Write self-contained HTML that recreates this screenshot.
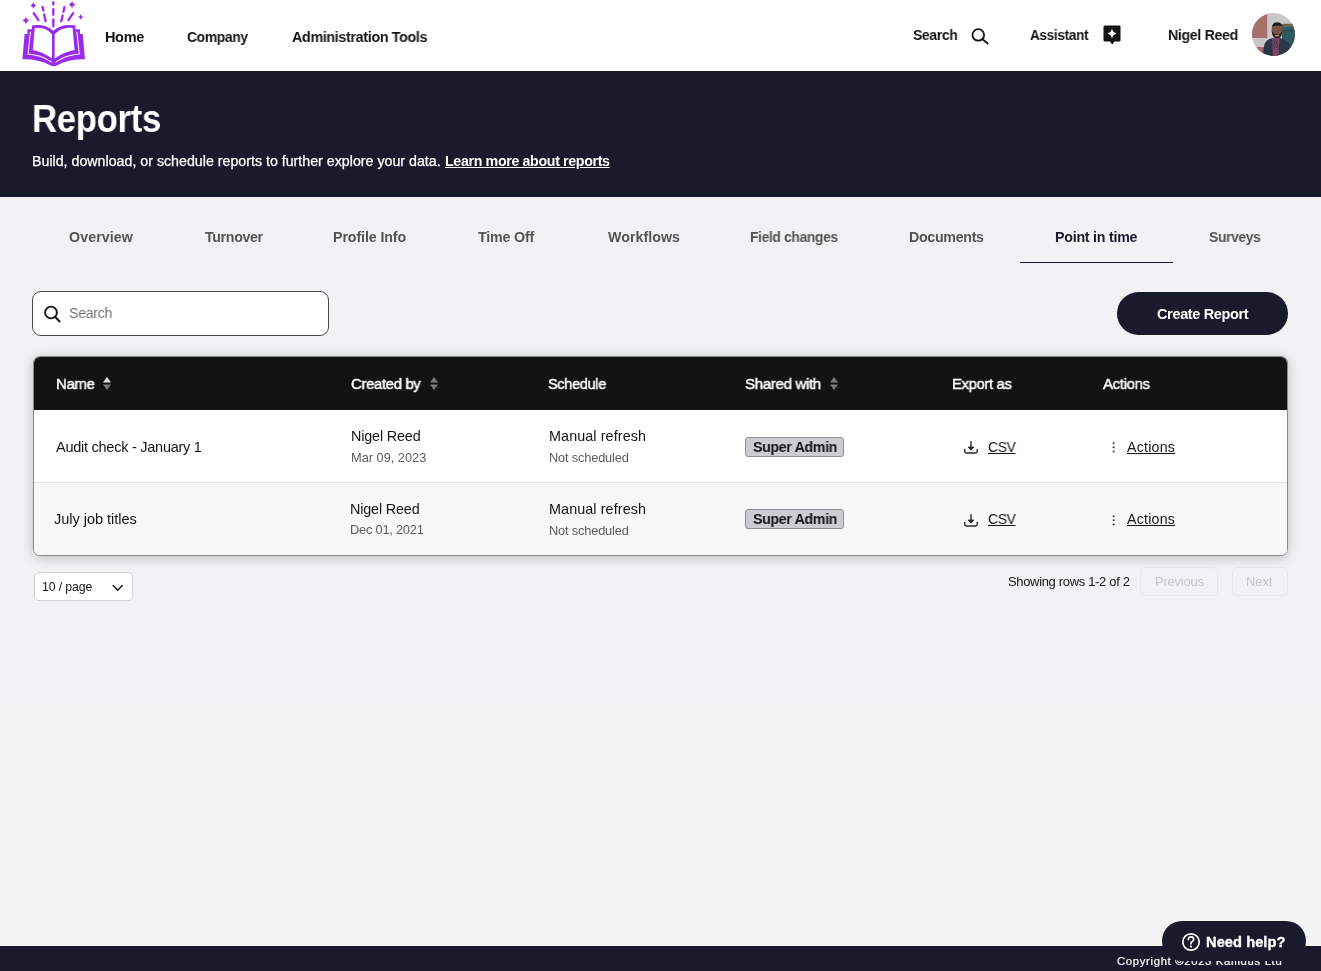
<!DOCTYPE html>
<html><head><meta charset="utf-8">
<title>Reports</title>
<style>
*{box-sizing:border-box;margin:0;padding:0}
html,body{width:1321px;height:971px;overflow:hidden}
.t{will-change:transform}
body{font-family:"Liberation Sans",sans-serif;background:#f2f2f4;color:#141414;position:relative}
.t{position:absolute;white-space:nowrap}
.box{position:absolute}
svg{position:absolute;overflow:visible}
</style></head><body>
<div class="box" style="left:0;top:706px;width:1321px;height:240px;background:#f3f3f3"></div>
<!-- header -->
<div class="box" style="left:0;top:0;width:1321px;height:71px;background:#fff"></div>
<svg style="left:18px;top:0" width="72" height="70" viewBox="0 0 999 971">
  <g fill="#9b2bea">
    <path d="M92,472 L130,472 L130,406 L193,406 L193,352 Q380,325 490,425 Q600,325 797,352 L797,406 L860,406 L860,472 L898,472 L930,823 Q720,815 545,905 Q490,935 445,905 Q270,815 61,823 Z"/>
  </g>
  <g fill="#fff">
    <path d="M232,388 Q385,372 472,475 L472,812 Q340,718 206,694 Z"/>
    <path d="M758,388 Q605,372 508,475 L508,812 Q640,718 784,694 Z"/>
  </g>
  <g fill="none" stroke="#fff" stroke-width="14" stroke-linecap="round">
    <path d="M172,445 L140,750 Q330,768 462,858"/>
    <path d="M818,445 L850,750 Q660,768 528,858"/>
  </g>
  <g fill="none" stroke="#9b2bea" stroke-width="32" stroke-linecap="round">
    <path d="M490,30 L490,62"/>
    <path d="M490,128 L490,205"/>
    <path d="M490,268 L490,365"/>
    <path d="M340,95 L352,145"/>
    <path d="M362,200 L383,292"/>
    <path d="M645,98 L630,162"/>
    <path d="M620,215 L600,295"/>
    <path d="M218,182 L283,278"/>
    <path d="M765,182 L700,278"/>
  </g>
  <g fill="#9b2bea">
    <path d="M110,235 Q120,275 155,285 Q120,295 110,335 Q100,295 62,285 Q100,275 110,235 Z"/>
    <path d="M213,30 Q222,65 252,75 Q222,85 213,120 Q204,85 174,75 Q204,65 213,30 Z"/>
    <path d="M750,15 Q760,55 795,65 Q760,75 750,115 Q740,75 705,65 Q740,55 750,15 Z"/>
    <path d="M870,195 Q878,228 905,235 Q878,242 870,275 Q862,242 835,235 Q862,228 870,195 Z"/>
  </g>
</svg>
<!-- header search icon -->
<svg style="left:968px;top:25px" width="24" height="22" viewBox="0 0 24 22">
  <circle cx="10.3" cy="9.9" r="5.8" fill="none" stroke="#141414" stroke-width="1.8"/>
  <path d="M14.6,14.2 L19.6,18.4" stroke="#141414" stroke-width="1.9" stroke-linecap="round"/>
</svg>
<!-- assistant icon -->
<svg style="left:1100px;top:22px" width="24" height="26" viewBox="0 0 24 26">
  <path d="M5.5,3.5 L19.5,3.5 Q20.5,3.5 20.5,4.5 L20.5,18.5 Q20.5,19.5 19.5,19.5 L14.5,19.5 L12.2,22.6 L9.9,19.5 L5.5,19.5 Q3.5,19.5 3.5,18.5 L3.5,4.5 Q3.5,3.5 5.5,3.5 Z" fill="#141414"/>
  <path d="M12,6.5 Q12.7,10.6 16.7,11.5 Q12.7,12.4 12,16.5 Q11.3,12.4 7.3,11.5 Q11.3,10.6 12,6.5 Z" fill="#fff"/>
</svg>
<!-- avatar -->
<svg style="left:1252px;top:13px" width="43" height="43" viewBox="0 0 43 43">
  <defs><clipPath id="av"><circle cx="21.5" cy="21.5" r="21.5"/></clipPath></defs>
  <g clip-path="url(#av)">
    <rect x="0" y="0" width="43" height="43" fill="#c7c7ca"/>
    <rect x="0" y="0" width="15.2" height="25" fill="#a86f6b"/>
    <rect x="0" y="34" width="14" height="10" fill="#a3716c"/>
    <rect x="29.5" y="10.8" width="14" height="2.4" fill="#75604f"/>
    <rect x="30" y="13.2" width="13" height="30" fill="#2f5b60"/>
    <rect x="30" y="17" width="13" height="1.2" fill="#254a4e"/>
    <path d="M10.2,43 L12.5,31 Q14.5,26.5 20,25.2 L28,25 Q36.5,27 38.6,33 L40,43 Z" fill="#2e3748"/>
    <path d="M20.1,25 L27.5,25 L26.5,43 L21,43 Z" fill="#7d4466"/>
    <path d="M21.5,27 L23,29 L21.8,31 L23.5,33 L22,35.5 M25.5,27 L24.5,30 L26,32.5 L24.8,35" stroke="#3a3454" stroke-width="1" fill="none"/>
    <path d="M19.6,17.5 Q19.5,11.5 25,11 Q30.6,11.2 30.5,17.5 Q30.3,24.8 25,25.2 Q19.8,24.8 19.6,17.5 Z" fill="#7c5442"/>
    <path d="M19.8,14.5 Q20.3,9.2 25.5,9.3 Q30.6,9.7 30.6,15.2 L29.6,13.2 Q25,11.6 20.6,13.8 Z" fill="#1f1b1b"/>
    <path d="M19.8,18.2 Q20.5,25.3 25,25.6 Q29.8,25.3 30.3,18.2 Q28.5,21.6 25.2,21.8 Q22,21.6 19.8,18.2 Z" fill="#2a201c"/>
    <path d="M23,22.5 Q25,23.6 27.2,22.5" stroke="#d8cfc8" stroke-width="0.9" fill="none"/>
  </g>
</svg>
<!-- banner -->
<div class="box" style="left:0;top:71px;width:1321px;height:126px;background:#191a2c"></div>
<!-- tab underline -->
<div class="box" style="left:1020px;top:262px;width:153px;height:1px;background:#191a2c"></div>
<!-- search input -->
<div class="box" style="left:32px;top:291px;width:297px;height:45px;border:1px solid #4a4a4a;border-radius:9px;background:#fff"></div>
<svg style="left:40px;top:302px" width="24" height="24" viewBox="0 0 24 24">
  <circle cx="11" cy="10.5" r="5.9" fill="none" stroke="#141414" stroke-width="1.9"/>
  <path d="M15.3,15 L19.6,19.5" stroke="#141414" stroke-width="2" stroke-linecap="round"/>
</svg>
<!-- create report -->
<div class="box" style="left:1117px;top:292px;width:171px;height:43px;border-radius:22px;background:#191a2c"></div>
<!-- table -->
<div class="box" style="left:33px;top:356px;width:1255px;height:200px;border-radius:7px;background:#fff;box-shadow:0 2px 12px rgba(0,0,0,.22);border:1px solid #8a8a8a;overflow:hidden">
  <div class="box" style="left:0;top:0;width:1253px;height:53px;background:#131313"></div>
  <div class="box" style="left:0;top:125px;width:1253px;height:73px;background:#f8f8f8;border-top:1px solid #e4e4e6"></div>
</div>
<!-- sort icons -->
<svg style="left:102px;top:376px" width="10" height="15" viewBox="0 0 10 15">
  <path d="M1,6.5 L5,1 L9,6.5 Z" fill="#e0e0e0"/><path d="M1,8.5 L5,14 L9,8.5 Z" fill="#7a7a7a"/>
</svg>
<svg style="left:429px;top:376px" width="10" height="15" viewBox="0 0 10 15">
  <path d="M1,6.5 L5,1 L9,6.5 Z" fill="#7a7a7a"/><path d="M1,8.5 L5,14 L9,8.5 Z" fill="#7a7a7a"/>
</svg>
<svg style="left:829px;top:376px" width="10" height="15" viewBox="0 0 10 15">
  <path d="M1,6.5 L5,1 L9,6.5 Z" fill="#7a7a7a"/><path d="M1,8.5 L5,14 L9,8.5 Z" fill="#7a7a7a"/>
</svg>
<!-- badges -->
<div class="box" style="left:745px;top:437px;width:99px;height:20px;background:#cbcbd0;border:1px solid #8e8e94;border-radius:3px"></div>
<div class="box" style="left:745px;top:509px;width:99px;height:20px;background:#cbcbd0;border:1px solid #8e8e94;border-radius:3px"></div>
<!-- download icons -->
<svg style="left:962px;top:439px" width="18" height="17" viewBox="0 0 18 17">
  <path d="M9,2.6 L9,10.6" fill="none" stroke="#2a2a2a" stroke-width="1.4" stroke-linecap="round"/>
  <path d="M6.2,8 L9,11.1 L11.8,8 Z" fill="#2a2a2a" stroke="#2a2a2a" stroke-width="0.9" stroke-linejoin="round"/>
  <path d="M2.8,10.4 L2.8,12.6 Q2.8,14 4.2,14 L13.8,14 Q15.2,14 15.2,12.6 L15.2,10.4" fill="none" stroke="#2a2a2a" stroke-width="1.4" stroke-linecap="round"/>
</svg>
<svg style="left:962px;top:511.5px" width="18" height="17" viewBox="0 0 18 17">
  <path d="M9,2.6 L9,10.6" fill="none" stroke="#2a2a2a" stroke-width="1.4" stroke-linecap="round"/>
  <path d="M6.2,8 L9,11.1 L11.8,8 Z" fill="#2a2a2a" stroke="#2a2a2a" stroke-width="0.9" stroke-linejoin="round"/>
  <path d="M2.8,10.4 L2.8,12.6 Q2.8,14 4.2,14 L13.8,14 Q15.2,14 15.2,12.6 L15.2,10.4" fill="none" stroke="#2a2a2a" stroke-width="1.4" stroke-linecap="round"/>
</svg>
<!-- kebab dots -->
<svg style="left:1110px;top:440px" width="8" height="15" viewBox="0 0 8 15">
  <circle cx="3.6" cy="3.2" r="1" fill="#333"/><circle cx="3.6" cy="7.3" r="1" fill="#333"/><circle cx="3.6" cy="11.4" r="1" fill="#333"/>
</svg>
<svg style="left:1110px;top:512.5px" width="8" height="15" viewBox="0 0 8 15">
  <circle cx="3.6" cy="3.2" r="1" fill="#333"/><circle cx="3.6" cy="7.3" r="1" fill="#333"/><circle cx="3.6" cy="11.4" r="1" fill="#333"/>
</svg>
<!-- pagination -->
<div class="box" style="left:34px;top:572px;width:99px;height:29px;background:#fff;border:1px solid #d2d2d4;border-radius:5px"></div>
<svg style="left:110px;top:582px" width="16" height="12" viewBox="0 0 16 12">
  <path d="M3.2,3.6 L7.7,8.3 L12.2,3.6" fill="none" stroke="#141414" stroke-width="1.45" stroke-linecap="round" stroke-linejoin="round"/>
</svg>
<div class="box" style="left:1140px;top:567px;width:78px;height:29px;border:1px solid #e7e7ea;border-radius:5px"></div>
<div class="box" style="left:1232px;top:567px;width:56px;height:29px;border:1px solid #e7e7ea;border-radius:5px"></div>
<!-- footer -->
<div class="box" style="left:0;top:946px;width:1321px;height:25px;background:#191a2c"></div>
<div class="t" id="home" style="left:105.49px;top:30px;font-size:14.5px;line-height:14.5px;letter-spacing:-0.35px;transform:scaleX(0.9881);transform-origin:0 0;font-weight:bold;color:#141414;">Home</div>
<div class="t" id="company" style="left:187.29px;top:30px;font-size:14.5px;line-height:14.5px;letter-spacing:-0.35px;transform:scaleX(0.9539);transform-origin:0 0;font-weight:bold;color:#141414;">Company</div>
<div class="t" id="admin" style="left:291.7px;top:30px;font-size:14.5px;line-height:14.5px;letter-spacing:-0.35px;transform:scaleX(0.9869);transform-origin:0 0;font-weight:bold;color:#141414;">Administration Tools</div>
<div class="t" id="hsearch" style="left:913.3px;top:28px;font-size:14.5px;line-height:14.5px;letter-spacing:-0.35px;transform:scaleX(0.9618);transform-origin:0 0;font-weight:bold;color:#141414;">Search</div>
<div class="t" id="assist" style="left:1029.98px;top:28px;font-size:14.5px;line-height:14.5px;letter-spacing:-0.35px;transform:scaleX(0.9360);transform-origin:0 0;font-weight:bold;color:#141414;">Assistant</div>
<div class="t" id="hname" style="left:1167.76px;top:28px;font-size:14.5px;line-height:14.5px;letter-spacing:-0.35px;transform:scaleX(0.9772);transform-origin:0 0;font-weight:bold;color:#141414;">Nigel Reed</div>
<div class="t" id="title" style="left:32.19px;top:100px;font-size:38.28px;line-height:38.28px;letter-spacing:-0.35px;transform:scaleX(0.9071);transform-origin:0 0;font-weight:bold;color:#ffffff;">Reports</div>
<div class="t" id="subtitle" style="left:32.48px;top:154px;font-size:14.22px;line-height:14.22px;letter-spacing:0.0px;color:#ffffff;-webkit-text-stroke:0.25px #fff;">Build, download, or schedule reports to further explore your data.</div>
<div class="t" id="link" style="left:445.3px;top:154px;font-size:14.22px;line-height:14.22px;letter-spacing:-0.348px;font-weight:bold;color:#ffffff;text-decoration:underline;text-underline-offset:1px;">Learn more about reports</div>
<div class="t" id="t1" style="left:68.52px;top:230px;font-size:14.22px;line-height:14.22px;letter-spacing:0.1px;font-weight:bold;color:#545454;">Overview</div>
<div class="t" id="t2" style="left:204.5px;top:230px;font-size:14.22px;line-height:14.22px;letter-spacing:-0.35px;transform:scaleX(0.9954);transform-origin:0 0;font-weight:bold;color:#545454;">Turnover</div>
<div class="t" id="t3" style="left:333.48px;top:230px;font-size:14.22px;line-height:14.22px;letter-spacing:-0.1px;font-weight:bold;color:#545454;">Profile Info</div>
<div class="t" id="t4" style="left:478.22px;top:230px;font-size:14.22px;line-height:14.22px;letter-spacing:-0.157px;font-weight:bold;color:#545454;">Time Off</div>
<div class="t" id="t5" style="left:607.76px;top:230px;font-size:14.22px;line-height:14.22px;letter-spacing:0.05px;font-weight:bold;color:#545454;">Workflows</div>
<div class="t" id="t6" style="left:750.29px;top:230px;font-size:14.22px;line-height:14.22px;letter-spacing:-0.35px;transform:scaleX(0.9722);transform-origin:0 0;font-weight:bold;color:#545454;">Field changes</div>
<div class="t" id="t7" style="left:909.02px;top:230px;font-size:14.22px;line-height:14.22px;letter-spacing:-0.3px;font-weight:bold;color:#545454;">Documents</div>
<div class="t" id="t8" style="left:1054.74px;top:230px;font-size:14.22px;line-height:14.22px;letter-spacing:-0.233px;font-weight:bold;color:#191a2c;">Point in time</div>
<div class="t" id="t9" style="left:1208.55px;top:230px;font-size:14.22px;line-height:14.22px;letter-spacing:-0.35px;transform:scaleX(0.9734);transform-origin:0 0;font-weight:bold;color:#545454;">Surveys</div>
<div class="t" id="ph" style="left:69.27px;top:306px;font-size:14.64px;line-height:14.64px;letter-spacing:-0.35px;transform:scaleX(0.9711);transform-origin:0 0;color:#757575;">Search</div>
<div class="t" id="create" style="left:1156.52px;top:307px;font-size:14.5px;line-height:14.5px;letter-spacing:-0.35px;font-weight:bold;color:#ffffff;">Create Report</div>
<div class="t" id="h1" style="left:55.62px;top:376px;font-size:15.26px;line-height:15.26px;letter-spacing:-0.35px;transform:scaleX(0.9802);transform-origin:0 0;color:#ffffff;-webkit-text-stroke:0.45px #fff;">Name</div>
<div class="t" id="h2" style="left:351.42px;top:376px;font-size:15.26px;line-height:15.26px;letter-spacing:-0.35px;transform:scaleX(0.9767);transform-origin:0 0;color:#ffffff;-webkit-text-stroke:0.45px #fff;">Created by</div>
<div class="t" id="h3" style="left:548.05px;top:376px;font-size:15.26px;line-height:15.26px;letter-spacing:-0.35px;transform:scaleX(0.9538);transform-origin:0 0;color:#ffffff;-webkit-text-stroke:0.45px #fff;">Schedule</div>
<div class="t" id="h4" style="left:745.21px;top:376px;font-size:15.26px;line-height:15.26px;letter-spacing:-0.35px;transform:scaleX(0.9894);transform-origin:0 0;color:#ffffff;-webkit-text-stroke:0.45px #fff;">Shared with</div>
<div class="t" id="h5" style="left:952.13px;top:376px;font-size:15.26px;line-height:15.26px;letter-spacing:-0.35px;transform:scaleX(0.9734);transform-origin:0 0;color:#ffffff;-webkit-text-stroke:0.45px #fff;">Export as</div>
<div class="t" id="h6" style="left:1103.3px;top:376px;font-size:15.26px;line-height:15.26px;letter-spacing:-0.35px;transform:scaleX(0.9812);transform-origin:0 0;color:#ffffff;-webkit-text-stroke:0.45px #fff;">Actions</div>
<div class="t" id="r1a" style="left:55.76px;top:440px;font-size:14.5px;line-height:14.5px;letter-spacing:-0.255px;color:#141414;">Audit check - January 1</div>
<div class="t" id="r1b" style="left:350.76px;top:429px;font-size:14.36px;line-height:14.36px;letter-spacing:-0.156px;color:#141414;">Nigel Reed</div>
<div class="t" id="r1c" style="left:350.76px;top:452px;font-size:12.84px;line-height:12.84px;letter-spacing:-0.027px;color:#5c5c5c;">Mar 09, 2023</div>
<div class="t" id="r1d" style="left:548.5px;top:429px;font-size:14.36px;line-height:14.36px;letter-spacing:0.092px;color:#141414;">Manual refresh</div>
<div class="t" id="r1e" style="left:548.5px;top:452px;font-size:12.84px;line-height:12.84px;letter-spacing:-0.183px;color:#5c5c5c;">Not scheduled</div>
<div class="t" id="r1f" style="left:752.54px;top:440px;font-size:14.5px;line-height:14.5px;letter-spacing:-0.35px;transform:scaleX(0.9794);transform-origin:0 0;font-weight:bold;color:#141414;">Super Admin</div>
<div class="t" id="r1g" style="left:988.22px;top:440px;font-size:14.22px;line-height:14.22px;letter-spacing:-0.35px;transform:scaleX(0.9780);transform-origin:0 0;color:#141414;text-decoration:underline;text-underline-offset:1px;">CSV</div>
<div class="t" id="r1h" style="left:1127.3px;top:440px;font-size:14.22px;line-height:14.22px;letter-spacing:0.217px;color:#141414;text-decoration:underline;text-underline-offset:1px;">Actions</div>
<div class="t" id="r2a" style="left:54.44px;top:512px;font-size:14.5px;line-height:14.5px;letter-spacing:-0.021px;color:#141414;">July job titles</div>
<div class="t" id="r2b" style="left:350.48px;top:502px;font-size:14.36px;line-height:14.36px;letter-spacing:-0.156px;color:#141414;">Nigel Reed</div>
<div class="t" id="r2c" style="left:350.48px;top:524px;font-size:12.84px;line-height:12.84px;letter-spacing:-0.227px;color:#5c5c5c;">Dec 01, 2021</div>
<div class="t" id="r2d" style="left:548.5px;top:502px;font-size:14.36px;line-height:14.36px;letter-spacing:0.092px;color:#141414;">Manual refresh</div>
<div class="t" id="r2e" style="left:548.5px;top:525px;font-size:12.84px;line-height:12.84px;letter-spacing:-0.183px;color:#5c5c5c;">Not scheduled</div>
<div class="t" id="r2f" style="left:752.54px;top:512px;font-size:14.5px;line-height:14.5px;letter-spacing:-0.35px;transform:scaleX(0.9794);transform-origin:0 0;font-weight:bold;color:#141414;">Super Admin</div>
<div class="t" id="r2g" style="left:988.22px;top:512px;font-size:14.22px;line-height:14.22px;letter-spacing:-0.35px;transform:scaleX(0.9780);transform-origin:0 0;color:#141414;text-decoration:underline;text-underline-offset:1px;">CSV</div>
<div class="t" id="r2h" style="left:1127.3px;top:512px;font-size:14.22px;line-height:14.22px;letter-spacing:0.217px;color:#141414;text-decoration:underline;text-underline-offset:1px;">Actions</div>
<div class="t" id="pg" style="left:41.74px;top:581px;font-size:12.29px;line-height:12.29px;letter-spacing:-0.112px;color:#141414;">10 / page</div>
<div class="t" id="show" style="left:1007.78px;top:575px;font-size:12.98px;line-height:12.98px;letter-spacing:-0.32px;color:#141414;">Showing rows 1-2 of 2</div>
<div class="t" id="prev" style="left:1154.5px;top:575px;font-size:12.98px;line-height:12.98px;letter-spacing:-0.2px;color:#c6c6ca;">Previous</div>
<div class="t" id="next" style="left:1246.0px;top:575px;font-size:12.98px;line-height:12.98px;letter-spacing:-0.067px;color:#c6c6ca;">Next</div>
<div class="t" id="help" style="left:1206.22px;top:935px;font-size:14.64px;line-height:14.64px;letter-spacing:0.067px;font-weight:bold;color:#ffffff;z-index:6;-webkit-text-stroke:0.35px #fff;">Need help?</div>
<div class="t" id="copy" style="left:1117.04px;top:956px;font-size:11.32px;line-height:11.32px;letter-spacing:0.667px;color:#ffffff;-webkit-text-stroke:0.2px #fff;">Copyright ©2023 Kallidus Ltd</div>
<div class="box" style="left:1162px;top:921px;width:144px;height:40px;border-radius:22px;background:#191a2c;z-index:4"></div>
<svg style="left:1180px;top:931px;z-index:5" width="22" height="22" viewBox="0 0 22 22">
  <circle cx="11" cy="11" r="8.2" fill="none" stroke="#fff" stroke-width="1.7"/>
  <path d="M8.3,8.6 Q8.4,5.8 11,5.8 Q13.7,5.8 13.7,8.3 Q13.7,9.9 11.9,10.7 Q11,11.2 11,12.8" fill="none" stroke="#fff" stroke-width="1.7" stroke-linecap="round"/>
  <circle cx="11" cy="15.6" r="1.05" fill="#fff"/>
</svg>
</body></html>
